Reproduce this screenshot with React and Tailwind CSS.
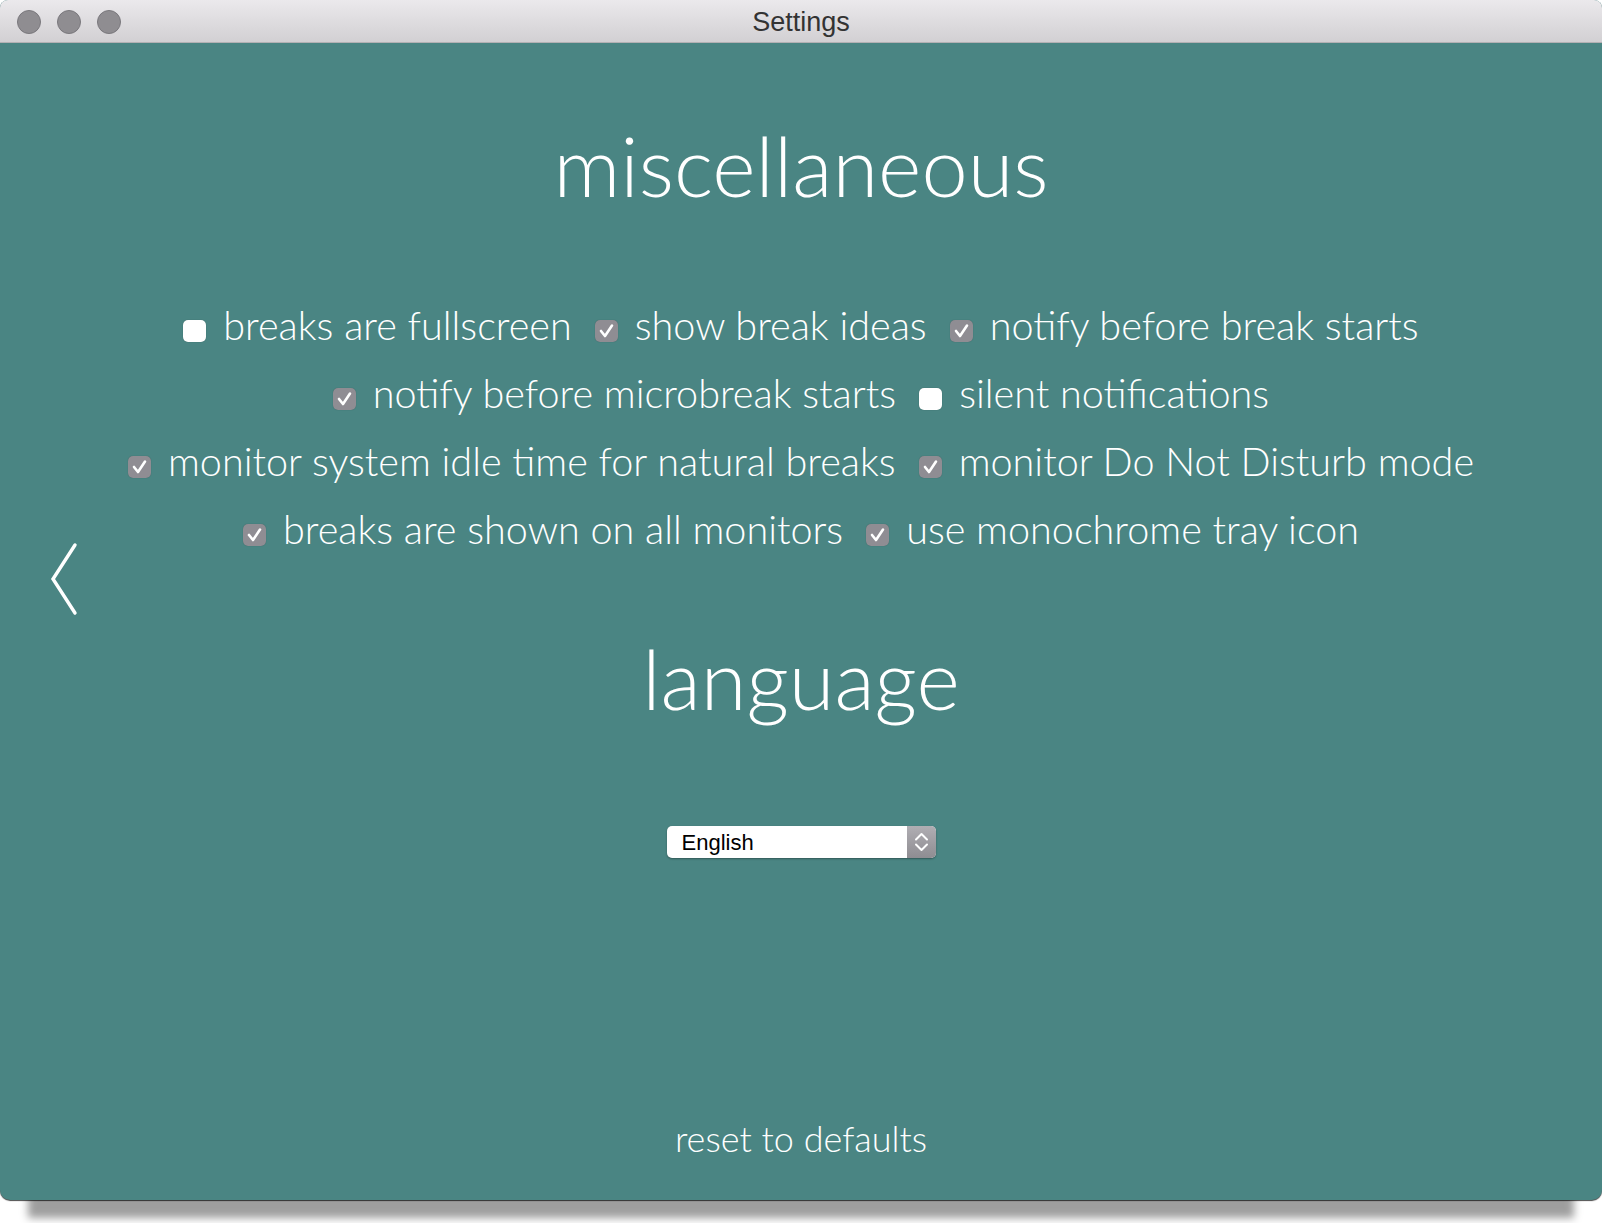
import React from "react";

const lato = { fontFamily: "Lato, 'Noto Sans', sans-serif" };

function Box({ checked }) {
  if (!checked) {
    return (
      <span className="mt-[29px] block h-[22px] w-[23px] shrink-0 rounded-[5px] bg-white shadow-[0_0_1px_rgba(0,0,0,0.35)]" />
    );
  }
  return (
    <span className="mt-[29px] flex h-[22px] w-[23px] shrink-0 items-center justify-center rounded-[5px] bg-[#8f8d93] shadow-[0_0_1px_rgba(0,0,0,0.3)]">
      <svg width="23" height="22" viewBox="0 0 23 22">
        <path d="M6 11 L10 16 L17 5.5" fill="none" stroke="white" strokeWidth="2.6" strokeLinecap="round" strokeLinejoin="round" />
      </svg>
    </span>
  );
}

function Item({ checked, label }) {
  return (
    <div className="flex items-start">
      <Box checked={checked} />
      <span className="ml-[17px] whitespace-nowrap">{label}</span>
    </div>
  );
}

const rows = [
  [
    [false, "breaks are fullscreen"],
    [true, "show break ideas"],
    [true, "notify before break starts"],
  ],
  [
    [true, "notify before microbreak starts"],
    [false, "silent notifications"],
  ],
  [
    [true, "monitor system idle time for natural breaks"],
    [true, "monitor Do Not Disturb mode"],
  ],
  [
    [true, "breaks are shown on all monitors"],
    [true, "use monochrome tray icon"],
  ],
];

export default function App() {
  return (
    <div className="h-[1223px] w-[1602px] overflow-hidden bg-white">
      <div className="relative flex h-[1200px] w-[1602px] flex-col rounded-t-[8px] rounded-b-[10px] bg-[#4a8583] shadow-[0_1px_1px_rgba(0,0,0,0.7),0_46px_8px_-28px_rgba(0,0,0,0.38)]">
        {/* title bar */}
        <div
          className="relative flex h-[43px] shrink-0 items-center justify-center rounded-t-[8px] border-b border-[#b3b1b4] bg-gradient-to-b from-[#ebe9ec] to-[#d2d0d3] pt-[3px]"
          style={{ fontFamily: "'Liberation Sans', Arial, sans-serif" }}
        >
          <div className="absolute left-[17px] top-[10px] flex gap-[16px]">
            <span className="block h-[24px] w-[24px] rounded-full border border-[#7a787d] bg-[#8f8d91]" />
            <span className="block h-[24px] w-[24px] rounded-full border border-[#7a787d] bg-[#8f8d91]" />
            <span className="block h-[24px] w-[24px] rounded-full border border-[#7a787d] bg-[#8f8d91]" />
          </div>
          <span className="text-[27px] leading-none text-[#333]">Settings</span>
        </div>

        {/* content */}
        <div className="relative flex flex-1 flex-col items-center text-white" style={lato}>
          <button className="absolute left-[44px] top-[492px] block">
            <svg width="40" height="90" viewBox="0 0 40 90">
              <polyline points="31,10 9,44 31,78" fill="none" stroke="white" strokeWidth="3.4" strokeLinecap="round" strokeLinejoin="miter" />
            </svg>
          </button>

          <h1 className="mt-[69px] h-[106px] text-[83px] font-light leading-[106px]">miscellaneous</h1>

          <div className="mt-[73px] flex flex-col items-center text-[39.6px] font-light">
            {rows.map((row, i) => (
              <div key={i} className="flex h-[68px] items-start justify-center gap-[23px] leading-[68px]">
                {row.map(([c, l]) => (
                  <Item key={l} checked={c} label={l} />
                ))}
              </div>
            ))}
          </div>

          <h2 className="mt-[62px] h-[106px] text-[83px] font-light leading-[106px]">language</h2>

          <div
            className="mt-[95px] flex h-[32px] w-[269px] overflow-hidden rounded-[5px] bg-white shadow-[0_1px_2px_rgba(0,0,0,0.35)]"
            style={{ fontFamily: "'Liberation Sans', Arial, sans-serif" }}
          >
            <span className="flex flex-1 items-center pl-[15px] text-[22px] text-black">English</span>
            <span className="flex w-[29px] items-center justify-center bg-gradient-to-b from-[#b0aeb3] to-[#8f8d92]">
              <svg width="29" height="32" viewBox="0 0 29 32">
                <polyline points="9,13.5 14.5,8 20,13.5" fill="none" stroke="white" strokeWidth="2" strokeLinecap="round" strokeLinejoin="round" />
                <polyline points="9,18.5 14.5,24 20,18.5" fill="none" stroke="white" strokeWidth="2" strokeLinecap="round" strokeLinejoin="round" />
              </svg>
            </span>
          </div>

          <button className="mb-[38px] mt-auto h-[48px] text-[36px] font-light leading-[48px] text-white">reset to defaults</button>
        </div>
      </div>
    </div>
  );
}
